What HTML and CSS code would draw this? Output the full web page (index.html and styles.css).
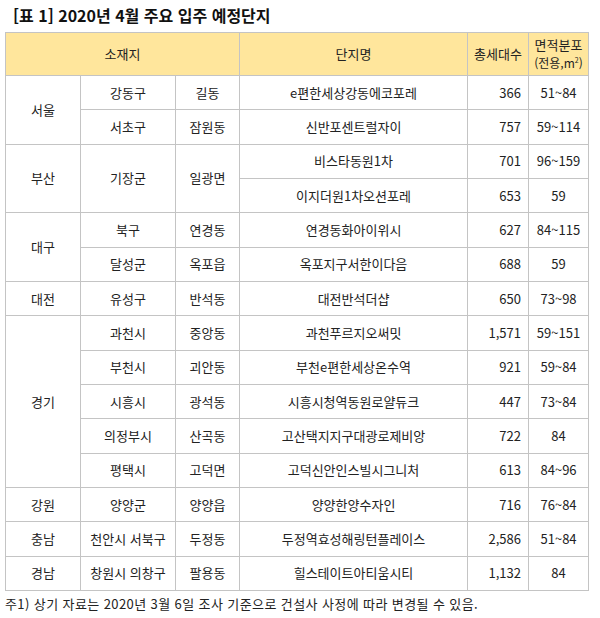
FILE: index.html
```html
<!DOCTYPE html>
<html lang="ko">
<head>
<meta charset="utf-8">
<link rel="stylesheet" href="styles.css">
</head>
<body>
<div class="page">
  <h1 class="title">[표 1] 2020년 4월 주요 입주 예정단지</h1>
  <table class="grid">
    <colgroup>
      <col class="c1"><col class="c2"><col class="c3"><col class="c4"><col class="c5"><col class="c6">
    </colgroup>
    <thead>
      <tr class="head">
        <th colspan="3">소재지</th>
        <th>단지명</th>
        <th>총세대수</th>
        <th class="area-head">면적분포<br><span class="unit">(전용,m<sup>2</sup>)</span></th>
      </tr>
    </thead>
    <tbody>
      <tr><td rowspan="2">서울</td><td>강동구</td><td>길동</td><td>e편한세상강동에코포레</td><td class="num">366</td><td>51~84</td></tr>
      <tr><td>서초구</td><td>잠원동</td><td>신반포센트럴자이</td><td class="num">757</td><td>59~114</td></tr>
      <tr><td rowspan="2">부산</td><td rowspan="2">기장군</td><td rowspan="2">일광면</td><td>비스타동원1차</td><td class="num">701</td><td>96~159</td></tr>
      <tr><td>이지더원1차오션포레</td><td class="num">653</td><td>59</td></tr>
      <tr><td rowspan="2">대구</td><td>북구</td><td>연경동</td><td>연경동화아이위시</td><td class="num">627</td><td>84~115</td></tr>
      <tr><td>달성군</td><td>옥포읍</td><td>옥포지구서한이다음</td><td class="num">688</td><td>59</td></tr>
      <tr><td>대전</td><td>유성구</td><td>반석동</td><td>대전반석더샵</td><td class="num">650</td><td>73~98</td></tr>
      <tr><td rowspan="5">경기</td><td>과천시</td><td>중앙동</td><td>과천푸르지오써밋</td><td class="num">1,571</td><td>59~151</td></tr>
      <tr><td>부천시</td><td>괴안동</td><td>부천e편한세상온수역</td><td class="num">921</td><td>59~84</td></tr>
      <tr><td>시흥시</td><td>광석동</td><td>시흥시청역동원로얄듀크</td><td class="num">447</td><td>73~84</td></tr>
      <tr><td>의정부시</td><td>산곡동</td><td>고산택지지구대광로제비앙</td><td class="num">722</td><td>84</td></tr>
      <tr><td>평택시</td><td>고덕면</td><td>고덕신안인스빌시그니처</td><td class="num">613</td><td>84~96</td></tr>
      <tr><td>강원</td><td>양양군</td><td>양양읍</td><td>양양한양수자인</td><td class="num">716</td><td>76~84</td></tr>
      <tr><td>충남</td><td>천안시 서북구</td><td>두정동</td><td>두정역효성해링턴플레이스</td><td class="num">2,586</td><td>51~84</td></tr>
      <tr><td>경남</td><td>창원시 의창구</td><td>팔용동</td><td>힐스테이트아티움시티</td><td class="num">1,132</td><td>84</td></tr>
    </tbody>
  </table>
  <p class="note">주1) 상기 자료는 2020년 3월 6일 조사 기준으로 건설사 사정에 따라 변경될 수 있음.</p>
</div>
</body>
</html>
```

FILE: styles.css
```css
html, body {
  margin: 0;
  padding: 0;
  background: #ffffff;
}

body {
  font-family: "Noto Sans CJK KR", "Noto Sans", sans-serif;
  color: #222222;
}

.page {
  padding: 0 0 0 5px;
  width: 583px;
}

.title {
  margin: 0;
  padding: 5px 0 0 8px;
  height: 32px;
  box-sizing: border-box;
  font-size: 16px;
  font-weight: 700;
  line-height: 21px;
  color: #111111;
}

.grid {
  border-collapse: collapse;
  table-layout: fixed;
  width: 583px;
  font-size: 13px;
  line-height: 16px;
}

.c1 { width: 75px; }
.c2 { width: 95px; }
.c3 { width: 64px; }
.c4 { width: 228px; }
.c5 { width: 61px; }
.c6 { width: 60px; }

.grid th,
.grid td {
  border: 1px solid #c4c4c4;
  text-align: center;
  vertical-align: middle;
  padding: 0 2px;
  font-weight: 400;
  white-space: nowrap;
}

.head th {
  background: #ffe69c;
  height: 42px;
}

.grid tbody tr {
  height: 34.33px;
}

.grid td.num {
  text-align: right;
  padding-right: 7px;
}

.area-head {
  line-height: 18px;
}

.unit {
  font-size: 12px;
}

.unit sup {
  font-size: 7px;
  line-height: 0;
  vertical-align: 5px;
}

.note {
  margin: 5px 0 0 0;
  font-size: 13px;
  line-height: 16px;
  letter-spacing: 0.4px;
}
```
